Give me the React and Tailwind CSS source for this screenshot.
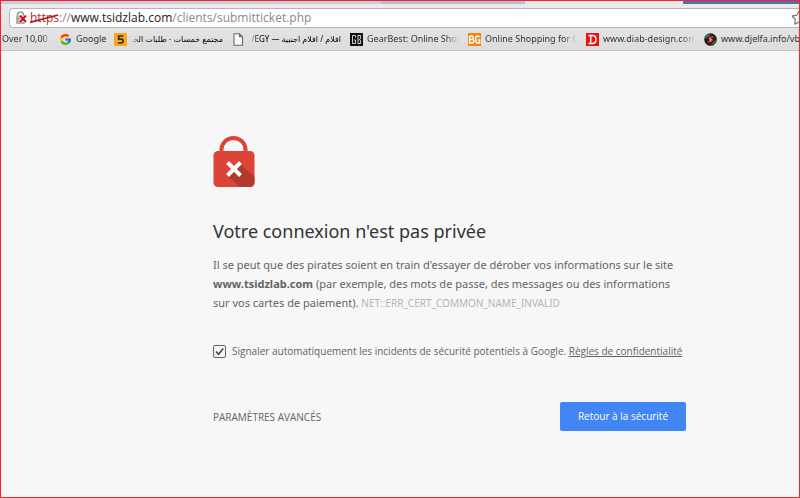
import { Star } from 'lucide-react';
import { FcGoogle } from 'react-icons/fc';

const TabStrip = () => (
  <div className="flex h-[3px] bg-[#b9c6d9]">
    <div className="w-[380px] bg-[#c3cedd]"></div>
    <div className="w-[144px] rounded-br bg-[#b4c0d2]"></div>
    <div className="flex-1 bg-[#e4e9f0]"></div>
    <div className="w-[116px] bg-[#4a73ad]"></div>
  </div>
);

const CertErrorIcon = () => (
  <svg viewBox="0 0 13 14" className="h-[14px] w-[13px] shrink-0">
    <path d="M2.5 6V4a3 3 0 0 1 6 0v2" fill="none" stroke="#9a9a9a" strokeWidth="1.6" />
    <rect x="1" y="5" width="9" height="8" rx="1" fill="#adadad" />
    <path d="M5 4.5l6 6.5M11 4.5L5 11" stroke="#fff" strokeWidth="3.2" />
    <path d="M5 4.5l6 6.5M11 4.5L5 11" stroke="#c8101b" strokeWidth="2" />
  </svg>
);

const AddressBar = () => (
  <div className="flex h-[20px] items-center overflow-hidden rounded-l-sm border border-r-0 border-[#b5b5b5] bg-white pl-[5px]">
    <CertErrorIcon />
    <div className="ml-[2px] flex-1 whitespace-nowrap text-[12px] leading-4 text-[#8a8a8a]">
      <span className="relative inline-block text-[#b0302c]">
        https
        <svg viewBox="0 0 30 10" preserveAspectRatio="none" className="absolute inset-x-0 top-1 h-[10px] w-full">
          <path d="M0 8.5L29 1" stroke="#b3161e" strokeWidth="1.8" fill="none" />
        </svg>
      </span>
      ://<span className="text-[#222]">www.tsidzlab.com</span>/clients/submitticket.php
    </div>
    <button type="button" aria-label="Ajouter aux favoris" className="-mr-2 shrink-0">
      <Star className="h-4 w-4 text-[#777]" strokeWidth={1.8} />
    </button>
  </div>
);

const KhamsatIcon = () => (
  <svg viewBox="0 0 13 13" className="h-[13px] w-[13px]">
    <rect width="13" height="13" fill="#f7a824" />
    <path d="M9.3 3H4.7v3.2h2.8q1.6 0 1.6 1.8T7.5 10H3.9" fill="none" stroke="#3b2a10" strokeWidth="1.7" />
  </svg>
);

const PageIcon = () => (
  <svg viewBox="0 0 13 13" className="h-[13px] w-[13px]">
    <path d="M2 .8h5.5l3 3v8.4H2zM7.5.8v3h3" fill="#fafafa" stroke="#6a6a6a" strokeWidth="1.1" />
  </svg>
);

const GearBestIcon = () => (
  <svg viewBox="0 0 13 13" className="h-[13px] w-[13px]">
    <rect width="13" height="13" fill="#111" />
    <path d="M5.5 4.5v-2h-3v8h3V7H4M8 2v9M8 2.5h2.6v3.2L9 6.5l1.6.8v3.2H8" fill="none" stroke="#cfcfcf" strokeWidth="1" />
  </svg>
);

const BanggoodIcon = () => (
  <svg viewBox="0 0 13 13" className="h-[13px] w-[13px]">
    <rect width="13" height="13" fill="#ee8413" />
    <path d="M1.6 3v7h2.6q1.5 0 1.5-1.8T4.2 6.5H1.6M1.6 3h2.3q1.4 0 1.4 1.7T3.9 6.5M11.6 4.2Q11 3 9.7 3 7.6 3 7.6 6.5T9.7 10h1.9V6.9H9.8" fill="none" stroke="#fff" strokeWidth="1.5" />
  </svg>
);

const DiabIcon = () => (
  <svg viewBox="0 0 13 13" className="h-[13px] w-[13px]">
    <rect width="13" height="13" fill="#ee1313" />
    <path d="M2.5 2.5h3.9Q10 2.5 10 6.5t-3.6 4H2.5M4.7 2.5v8" fill="none" stroke="#fff" strokeWidth="1.5" />
  </svg>
);

const DjelfaIcon = () => (
  <svg viewBox="0 0 13 13" className="h-[13px] w-[13px]">
    <circle cx="6.5" cy="6.5" r="6.3" fill="#1d1d1d" />
    <path d="M1 6Q2 1.2 6.8 1L5 3 3 4.5z" fill="#2c9c45" />
    <path d="M12 7Q11 11.8 6.5 12L9 10l1.5-2z" fill="#2c9c45" />
    <path d="M4 5.5q1-3 5-2.5l1 1.5-3 .5 2 1.5q0 2.5-3 3H3l1.2-1.5 2.3-.8z" fill="#e0303a" />
    <path d="M5 5.5l2.5 1.2L5 8.5" fill="none" stroke="#eee" strokeWidth=".7" />
  </svg>
);

const favoris = [
  { titre: 'Over 10,00', icone: null, box: 'w-[48px]', coupe: true },
  { titre: 'Google', icone: <FcGoogle className="h-[13px] w-[13px]" />, box: 'w-[29px]' },
  { titre: 'مجتمع خمسات - طلبات الخد', icone: <KhamsatIcon />, box: 'w-[92px]', rtl: true },
  { titre: 'افلام / افلام اجنبية — EGY/', icone: <PageIcon />, box: 'w-[92px]', rtl: true },
  { titre: 'GearBest: Online Shop', icone: <GearBestIcon />, box: 'w-[92px]', coupe: true },
  { titre: 'Online Shopping for C', icone: <BanggoodIcon />, box: 'w-[92px]', coupe: true },
  { titre: 'www.diab-design.com', icone: <DiabIcon />, box: 'w-[92px]', coupe: true },
  { titre: 'www.djelfa.info/vb', icone: <DjelfaIcon />, box: 'w-[92px]' },
];

const BookmarksBar = () => (
  <nav className="flex h-[23px] items-center gap-[9px] overflow-hidden border-b border-[#c2c2c2] pl-px font-['Noto_Sans','DejaVu_Sans',sans-serif] text-[9px] leading-4 text-[#333]">
    {favoris.map((f) => (
      <a key={f.titre} href="#" className="flex shrink-0 items-center gap-1">
        {f.icone}
        <span
          dir={f.rtl ? 'rtl' : 'ltr'}
          className={`${f.box} whitespace-nowrap ${f.rtl ? 'mask-l-from-90% text-[8px] text-black' : ''} ${f.coupe ? 'mask-r-from-85%' : ''}`}
        >
          {f.titre}
        </span>
      </a>
    ))}
  </nav>
);

const LockIcon = () => (
  <svg viewBox="0 0 42 52" className="h-[52px] w-[42px]">
    <path d="M8.5 17v-3.500a12 11.500 0 0 1 24 0V17" fill="none" stroke="#db4437" strokeWidth="4" />
    <rect x="0.5" y="15" width="41" height="36" rx="4.5" fill="#db4437" />
    <path d="M27 27.5L41.5 41v5.500a4.500 4.500 0 0 1-4.500 4.500H27L14 39.500z" fill="#b03a2e" />
    <path d="M14.5 26.500l13 13M27.500 26.500l-13 13" stroke="#fff" strokeWidth="4" />
  </svg>
);

const App = () => {
  return (
    <div className="flex min-h-screen flex-col border border-[#ff2020] bg-[#f7f7f7] font-['Open_Sans','Noto_Sans',sans-serif]">
      <header className="bg-linear-to-b from-[#ececec] to-[#dcdcdc]">
        <TabStrip />
        <div className="pl-2 pt-1">
          <AddressBar />
        </div>
        <BookmarksBar />
      </header>

      <main className="pl-[212px] pr-[113px] pt-[85px] text-[#646464]">
        <LockIcon />
        <h1 className="mt-[29px] font-['Noto_Sans',sans-serif] text-[18px] leading-7 text-[#333]">
          Votre connexion n'est pas privée
        </h1>
        <p className="mt-[10px] font-['Noto_Sans',sans-serif] text-[11px] leading-[19px]">
          Il se peut que des pirates soient en train d'essayer de dérober vos informations sur le site{' '}
          <strong>www.tsidzlab.com</strong> (par exemple, des mots de passe, des messages ou des informations
          sur vos cartes de paiement).{' '}
          <span className="text-[10px] text-[#b5b5b5]">NET::ERR_CERT_COMMON_NAME_INVALID</span>
        </p>

        <div className="mt-[30px] flex items-center gap-[6px] whitespace-nowrap text-[10px] leading-4">
          <span className="grid">
            <input
              id="signaler"
              type="checkbox"
              defaultChecked
              className="peer col-start-1 row-start-1 h-[13px] w-[13px] appearance-none rounded-xs border border-[#646464]"
            />
            <svg viewBox="0 0 13 13" className="pointer-events-none invisible col-start-1 row-start-1 h-[13px] w-[13px] peer-checked:visible">
              <path d="M3 6.5l2.5 2.7 4.800-5.700" fill="none" stroke="#444" strokeWidth="1.6" />
            </svg>
          </span>
          <span>
            <label htmlFor="signaler">
              Signaler automatiquement les incidents de sécurité potentiels à Google.
            </label>{' '}
            <a href="#" className="underline">Règles de confidentialité</a>
          </span>
        </div>

        <div className="mt-[43px] flex items-center justify-between">
          <button type="button" className="text-[10px] leading-4 uppercase">Paramètres avancés</button>
          <button type="button" className="h-[29px] w-[126px] rounded-xs bg-[#4285f4] text-[10px] text-white">
            Retour à la sécurité
          </button>
        </div>
      </main>
    </div>
  );
};

export default App;
